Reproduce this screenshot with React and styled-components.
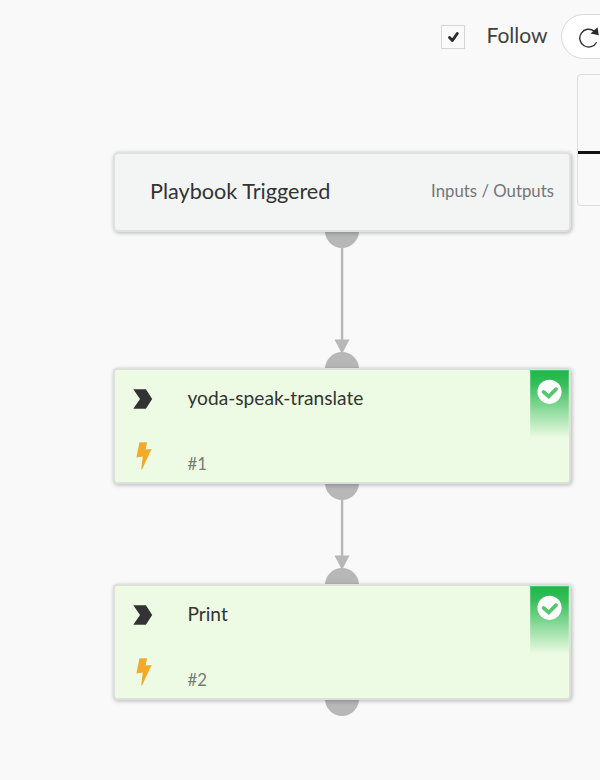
import React from "react";
import styled, { createGlobalStyle } from "styled-components";

const GlobalStyle = createGlobalStyle`
  *, *::before, *::after { box-sizing: border-box; }
  html, body { margin: 0; background: #f9f9f9; }
  body { font-family: Lato, "Liberation Sans", sans-serif; color: #333; }
`;

const Page = styled.div`
  width: 600px;
  height: 780px;
  overflow: hidden;
  background: #f9f9f9;
`;

const Toolbar = styled.header`
  display: flex;
  align-items: center;
  height: 74px;
  padding: 0 0 2px 441px;
`;

const FollowLabel = styled.label`
  display: flex;
  align-items: center;
  gap: 21.5px;
  flex: none;
  width: 120px;
  padding-bottom: 2px;
  font-size: 21px;
  line-height: 26px;
  color: #404142;
`;

const Checkbox = styled.span`
  display: flex;
  align-items: center;
  justify-content: center;
  flex: none;
  width: 24px;
  height: 24px;
  margin-top: 4px;
  border: 1px solid #d5d6d6;
  background: #fafafa;
`;

const RefreshButton = styled.button`
  flex: none;
  display: flex;
  align-items: center;
  width: 90px;
  height: 45px;
  padding: 0 0 0 17px;
  border: 1px solid #d8d9d9;
  border-radius: 23px;
  background: #fff;
`;

const Workspace = styled.main`
  display: flex;
  align-items: flex-start;
`;

const Flow = styled.section`
  flex: none;
  display: flex;
  flex-direction: column;
  width: 577px;
  padding: 78px 6px 0 113px;
`;

const SidePanel = styled.aside`
  flex: none;
  width: 60px;
  height: 132px;
  border: 1px solid #dcdddd;
  border-radius: 4px;
`;

const PanelTop = styled.div`
  height: 79px;
  border-bottom: 3px solid #111;
`;

const Card = styled.article`
  position: relative;
  z-index: 1;
  display: flex;
  flex: none;
  border: 2px solid #dfe1e0;
  border-radius: 4px;
  box-shadow: 1px 1px 4px rgba(0, 0, 0, 0.28);
`;

const TriggerCard = styled(Card)`
  align-items: center;
  justify-content: space-between;
  height: 80px;
  padding: 0 15px 2px 35px;
  border-radius: 5px;
  background: #f3f5f5;
`;

const TriggerTitle = styled.h2`
  margin: 0;
  font-size: 21.65px;
  font-weight: 400;
  line-height: 28px;
  white-space: nowrap;
`;

const InputsOutputs = styled.span`
  font-size: 16.8px;
  line-height: 22px;
  color: #747576;
  white-space: nowrap;
`;

const TaskCard = styled(Card)`
  height: 116px;
  border-color: #dce0da;
  background: #edfbe4;
`;

const IconRail = styled.div`
  display: flex;
  flex-direction: column;
  width: 72.5px;
  padding: 19px 0 0 18px;
  gap: 33px;
`;

const TaskText = styled.div`
  display: flex;
  flex-direction: column;
  flex: 1;
  padding-top: 16px;
`;

const TaskName = styled.h3`
  margin: 0;
  font-size: 19.15px;
  font-weight: 400;
  line-height: 24px;
`;

const TaskId = styled.span`
  margin-top: 43px;
  font-size: 16.8px;
  line-height: 22px;
  color: #787c76;
`;

const Status = styled.div`
  display: flex;
  justify-content: center;
  width: 39px;
  height: 68px;
  padding-top: 9px;
  background: linear-gradient(#20b548 0%, #35bd59 20%, #edfbe4 100%);
  box-shadow: inset 0 0 0 1px rgba(237, 251, 228, 0.22);
`;

const ConnectorSvg = styled.svg`
  display: block;
  flex: none;
  margin-left: 211px;
  fill: #b7b7b7;
`;

function Connector({ height }) {
  return (
    <ConnectorSvg width="36" height={height}>
      <circle cx="18" cy="-1" r="17" />
      <rect x="16.9" y="15" width="2.4" height={height - 42} />
      <path d={`M10.5 ${height - 28.5}h15l-7.5 14.5z`} />
      <circle cx="18" cy={height + 1} r="17" />
    </ConnectorSvg>
  );
}

function Task({ name, id }) {
  return (
    <TaskCard>
      <IconRail>
        <svg width="20" height="20" viewBox="0 0 20 20">
          <path d="M.3.2h12.6L19.2 10l-6.3 9.8H.3L7 10z" fill="#333" />
        </svg>
        <svg width="20" height="28" viewBox="0 0 20 28">
          <path d="M6.5.3H14l-1.3 7.2 5.9-.6L9 27.4H8.1L9.8 14.6l-6.4.9z" fill="#f2aa2b" />
        </svg>
      </IconRail>
      <TaskText>
        <TaskName>{name}</TaskName>
        <TaskId>{id}</TaskId>
      </TaskText>
      <Status>
        <svg width="25" height="25" viewBox="0 0 25 25">
          <circle cx="12.5" cy="12.8" r="12.1" fill="#fff" />
          <path
            d="M6.5 12.9l5.2 4.6 7.4-7.4"
            fill="none"
            stroke="#56c76e"
            strokeWidth="3.7"
            strokeLinecap="round"
          />
        </svg>
      </Status>
    </TaskCard>
  );
}

export default function App() {
  return (
    <Page>
      <GlobalStyle />
      <Toolbar>
        <FollowLabel>
          <Checkbox>
            <svg width="14" height="14" viewBox="0 0 14 14">
              <path
                d="M3.5 7.5l2.9 3 4.9-7"
                fill="none"
                stroke="#2b2b2b"
                strokeWidth="2.9"
                strokeLinecap="round"
                strokeLinejoin="round"
              />
            </svg>
          </Checkbox>
          Follow
        </FollowLabel>
        <RefreshButton aria-label="Refresh">
          <svg width="22" height="24" viewBox="0 0 22 24">
            <path d="M15.2 7.1A8.9 8.9 0 1 0 17.6 18.2" fill="none" stroke="#333" strokeWidth="1.4" />
            <path d="M11.6 9.6L18.5 3.3l1.3 7.9z" fill="#2b2b2b" />
          </svg>
        </RefreshButton>
      </Toolbar>
      <Workspace>
        <Flow>
          <TriggerCard>
            <TriggerTitle>Playbook Triggered</TriggerTitle>
            <InputsOutputs>Inputs / Outputs</InputsOutputs>
          </TriggerCard>
          <Connector height={136} />
          <Task name="yoda-speak-translate" id="#1" />
          <Connector height={100} />
          <Task name="Print" id="#2" />
          <ConnectorSvg width="36" height="17">
            <circle cx="18" cy="-1" r="17" />
          </ConnectorSvg>
        </Flow>
        <SidePanel>
          <PanelTop />
        </SidePanel>
      </Workspace>
    </Page>
  );
}
